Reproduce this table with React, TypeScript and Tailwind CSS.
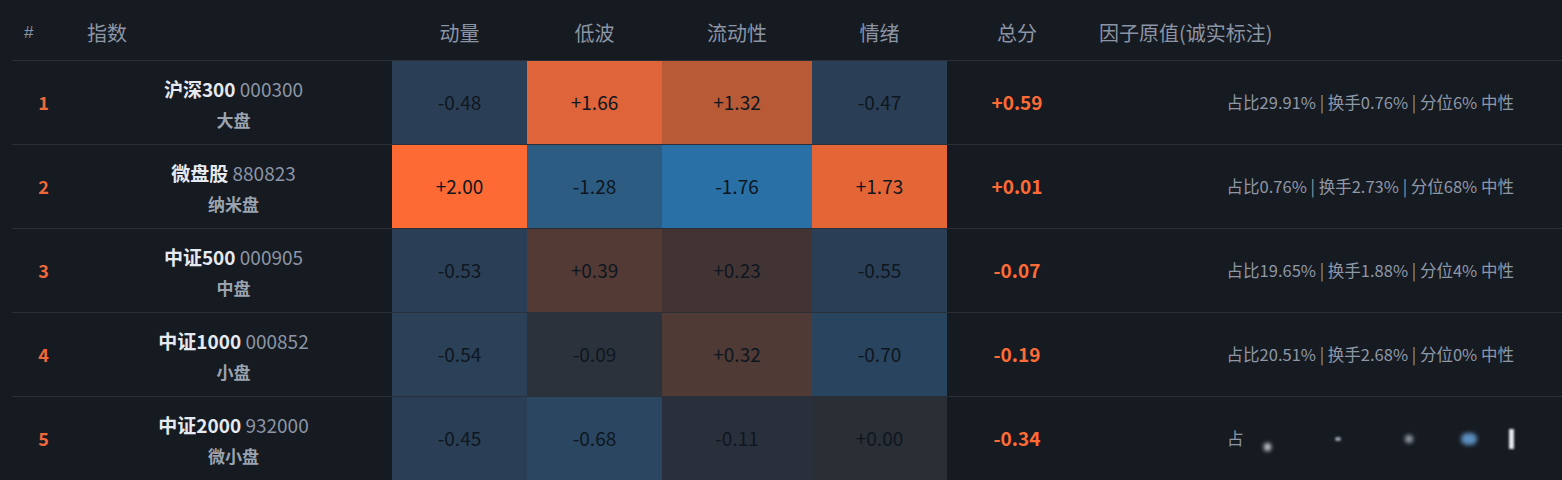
import React from 'react';

type Row = {
  rank: number;
  name: string;
  code: string;
  tag: string;
  cells: { v: string; bg: string }[];
  score: string;
  raw: string;
};

const rows: Row[] = [
  {
    rank: 1,
    name: '沪深300',
    code: '000300',
    tag: '大盘',
    cells: [
      { v: '-0.48', bg: 'bg-[#2a3f55]' },
      { v: '+1.66', bg: 'bg-[#e0643a]' },
      { v: '+1.32', bg: 'bg-[#b95a37]' },
      { v: '-0.47', bg: 'bg-[#2a3f55]' },
    ],
    score: '+0.59',
    raw: '占比29.91% | 换手0.76% | 分位6% 中性',
  },
  {
    rank: 2,
    name: '微盘股',
    code: '880823',
    tag: '纳米盘',
    cells: [
      { v: '+2.00', bg: 'bg-[#fd6a34]' },
      { v: '-1.28', bg: 'bg-[#2c5c82]' },
      { v: '-1.76', bg: 'bg-[#2870a5]' },
      { v: '+1.73', bg: 'bg-[#e46535]' },
    ],
    score: '+0.01',
    raw: '占比0.76% | 换手2.73% | 分位68% 中性',
  },
  {
    rank: 3,
    name: '中证500',
    code: '000905',
    tag: '中盘',
    cells: [
      { v: '-0.53', bg: 'bg-[#2a3f55]' },
      { v: '+0.39', bg: 'bg-[#533a35]' },
      { v: '+0.23', bg: 'bg-[#433434]' },
      { v: '-0.55', bg: 'bg-[#2a3f55]' },
    ],
    score: '-0.07',
    raw: '占比19.65% | 换手1.88% | 分位4% 中性',
  },
  {
    rank: 4,
    name: '中证1000',
    code: '000852',
    tag: '小盘',
    cells: [
      { v: '-0.54', bg: 'bg-[#2a4157]' },
      { v: '-0.09', bg: 'bg-[#2b323c]' },
      { v: '+0.32', bg: 'bg-[#4f3a36]' },
      { v: '-0.70', bg: 'bg-[#29445f]' },
    ],
    score: '-0.19',
    raw: '占比20.51% | 换手2.68% | 分位0% 中性',
  },
  {
    rank: 5,
    name: '中证2000',
    code: '932000',
    tag: '微小盘',
    cells: [
      { v: '-0.45', bg: 'bg-[#2a3f55]' },
      { v: '-0.68', bg: 'bg-[#2a4660]' },
      { v: '-0.11', bg: 'bg-[#2a303b]' },
      { v: '+0.00', bg: 'bg-[#2a2e35]' },
    ],
    score: '-0.34',
    raw: '',
  },
];

const cols = 'grid grid-cols-[63px_317px_135px_135px_150px_135px_140px_1fr]';

export default function App() {
  return (
    <div className="min-h-screen bg-[#161a21] font-['Noto_Sans_CJK_SC','Noto_Sans',sans-serif] pl-3 overflow-hidden h-[480px]">
      {/* header */}
      <div className={`${cols} h-[61px] items-center pt-[5px] border-b border-[#2a2f38] text-[20px] text-[#8b95a5]`}>
        <div className="pl-3 text-[17px] font-['Liberation_Sans',sans-serif]">#</div>
        <div className="pl-3">指数</div>
        <div className="text-center">动量</div>
        <div className="text-center">低波</div>
        <div className="text-center">流动性</div>
        <div className="text-center">情绪</div>
        <div className="text-center">总分</div>
        <div className="pl-3">因子原值(诚实标注)</div>
      </div>

      {rows.map((r) => (
        <div key={r.rank} className={`${cols} h-[84px] border-b border-[#2a2f38]`}>
          <div className="flex items-center justify-center text-[18px] font-bold text-[#f0683a]">{r.rank}</div>
          <div className="flex flex-col items-center justify-center gap-[13px] pt-[2px]">
            <div className="leading-none text-[19px]">
              <span className="font-bold text-[#e5e9f0]">{r.name}</span>
              <span className="text-[#8b95a5]"> {r.code}</span>
            </div>
            <div className="leading-none text-[17px] font-bold text-[#9aa3af]">{r.tag}</div>
          </div>
          {r.cells.map((c, i) => (
            <div
              key={i}
              className={`${c.bg} flex items-center justify-center text-[19px] text-[#0e1620]`}
            >
              {c.v}
            </div>
          ))}
          <div className="flex items-center justify-center text-[19px] font-bold text-[#ff6b35]">{r.score}</div>
          <div className="flex items-center justify-end pr-[48px] text-[16.5px] text-[#8e97a6]">
            {r.raw ? (
              r.raw
            ) : (
              <div className="flex items-center w-[287px] h-[30px]">
                <span>占</span>
                <span className="ml-5 mt-4 w-3 h-2 rounded-full bg-[#cfd4da] blur-[2px]" />
                <span className="ml-16 w-2 h-1 rounded-full bg-[#9aa3af] blur-[1px]" />
                <span className="ml-16 w-3 h-2 rounded-full bg-[#9aa3af] blur-[2px]" />
                <span className="ml-12 w-6 h-3 rounded-full bg-[#5b8fbf] blur-[2px]" />
                <span className="ml-8 w-2 h-5 bg-[#e5e7eb] blur-[1px]" />
              </div>
            )}
          </div>
        </div>
      ))}
    </div>
  );
}
